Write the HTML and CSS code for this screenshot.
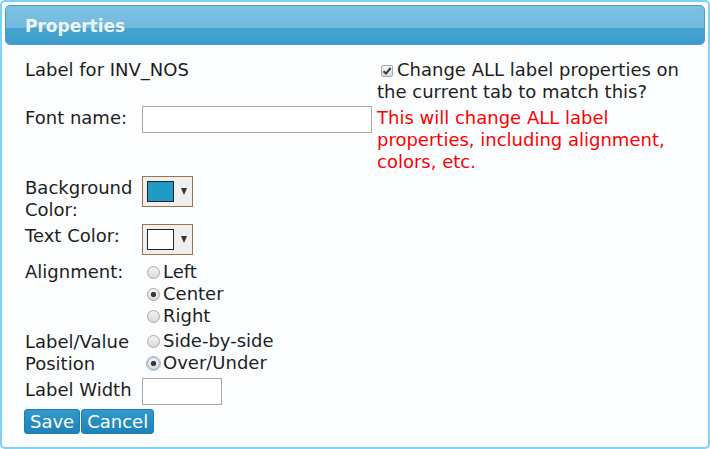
FILE: index.html
```html
<!DOCTYPE html>
<html lang="en">
<head>
    <meta charset="UTF-8">
    <title>Properties</title>
    <link rel="stylesheet" href="styles.css">
</head>
<body>
    <div class="dialog">
        <div class="dialog-title">Properties</div>
        <form class="props">
            <div class="cell span2">Label for INV_NOS</div>
            <div class="cell">
                <span class="check"><svg width="10" height="10" viewBox="0 0 10 10"><path d="M1.5 5.2 L4 7.6 L8.6 2" fill="none" stroke="#3a3a3a" stroke-width="2"/></svg></span>Change ALL label properties on the current tab to match this?
            </div>

            <label class="cell lbl" for="font_name">Font name:</label>
            <div class="cell"><input type="text" id="font_name" class="txt wide"></div>
            <div class="cell warn">This will change ALL label properties, including alignment, colors, etc.</div>

            <div class="cell lbl">Background Color:</div>
            <div class="cell span2">
                <div class="picker"><span class="swatch bg-blue"></span><span class="arrow"></span></div>
            </div>

            <div class="cell lbl">Text Color:</div>
            <div class="cell span2">
                <div class="picker"><span class="swatch"></span><span class="arrow"></span></div>
            </div>

            <div class="cell lbl pad3">Alignment:</div>
            <div class="cell span2 pad3">
                <label class="opt"><input type="radio" name="align">Left</label>
                <label class="opt"><input type="radio" name="align" checked>Center</label>
                <label class="opt"><input type="radio" name="align">Right</label>
            </div>

            <div class="cell lbl">Label/Value Position</div>
            <div class="cell span2">
                <label class="opt"><input type="radio" name="pos">Side-by-side</label>
                <label class="opt"><input type="radio" name="pos" class="focused" checked>Over/Under</label>
            </div>

            <label class="cell lbl" for="label_width">Label Width</label>
            <div class="cell span2"><input type="text" id="label_width" class="txt narrow"></div>
        </form>
        <div class="buttons">
            <button type="button">Save</button><button type="button">Cancel</button>
        </div>
    </div>
</body>
</html>
```

FILE: styles.css
```css
body {
    margin: 0;
    font-family: "DejaVu Sans", Verdana, sans-serif;
    font-size: 18px;
    line-height: 22px;
    color: #1e1e1e;
}
.dialog {
    width: 710px;
    height: 449px;
    box-sizing: border-box;
    border: 2px solid #7dd2f6;
    border-radius: 5px;
    background-color: #fbfdfe;
    padding: 3px;
}
.dialog-title {
    height: 40px;
    box-sizing: border-box;
    border: 1px solid #4a9bcc;
    border-radius: 5px;
    background: linear-gradient(#7dc1e1, #71badd 57%, #45a4cf 57%, #3e9ccb);
    color: #eef5fa;
    font-weight: bold;
    font-size: 17px;
    line-height: 40px;
    padding-left: 19px;
}
.props {
    display: grid;
    grid-template-columns: 117px 235px 315px;
    row-gap: 3px;
    align-items: start;
    margin: 14px 0 0 20px;
}
.cell {
    display: block;
}
.span2 {
    grid-column: span 2;
}
.lbl {
    padding-top: 1px;
}
.pad3 {
    padding-top: 3px;
}
.warn {
    color: #ff0000;
    padding-top: 1px;
}
.check {
    display: inline-block;
    width: 10px;
    height: 10px;
    border: 1px solid #a8a8a8;
    border-radius: 2px;
    background: linear-gradient(#f6f6f6, #dcdcdc);
    margin: 0 4px 0 4px;
    vertical-align: -1px;
    position: relative;
}
.check svg {
    position: absolute;
    left: 0;
    top: 0;
}
.txt {
    display: block;
    height: 27px;
    box-sizing: border-box;
    border: 1px solid #a9a9a9;
    background: #fff;
    font: inherit;
    margin: 0;
    padding: 2px 4px;
}
.wide {
    width: 230px;
}
.narrow {
    width: 80px;
}
.picker {
    width: 51px;
    height: 31px;
    box-sizing: border-box;
    border: 1px solid #957659;
    background: #efefef;
    display: flex;
    align-items: center;
    padding-left: 4px;
}
.swatch {
    width: 27px;
    height: 21px;
    box-sizing: border-box;
    border: 1px solid #222;
    background: #fff;
}
.bg-blue {
    background: #209bc6;
}
.arrow {
    width: 0;
    height: 0;
    margin-left: 7px;
    border-left: 3.5px solid transparent;
    border-right: 3.5px solid transparent;
    border-top: 7px solid #333;
}
.opt {
    display: flex;
    align-items: center;
}
.opt input {
    -webkit-appearance: none;
    appearance: none;
    width: 13px;
    height: 13px;
    margin: 0 3px 0 5px;
    border: 1px solid #aaa;
    border-radius: 50%;
    background: linear-gradient(#f4f4f4, #d9d9d9);
    box-sizing: border-box;
}
.opt input:checked {
    background: radial-gradient(circle, #3c3c3c 0 2.3px, transparent 3px), linear-gradient(#f4f4f4, #d9d9d9);
}
.opt input.focused {
    outline: 1px solid #8fc0f0;
    outline-offset: 0;
}
.buttons {
    display: flex;
    gap: 1px;
    margin: 4px 0 0 19px;
}
button {
    font: inherit;
    color: #fff;
    height: 25px;
    line-height: 21px;
    padding: 0 5px;
    border: 1px solid #1f7db0;
    border-radius: 3px;
    background: linear-gradient(#3199cb, #1e83b8);
    cursor: pointer;
}
```
